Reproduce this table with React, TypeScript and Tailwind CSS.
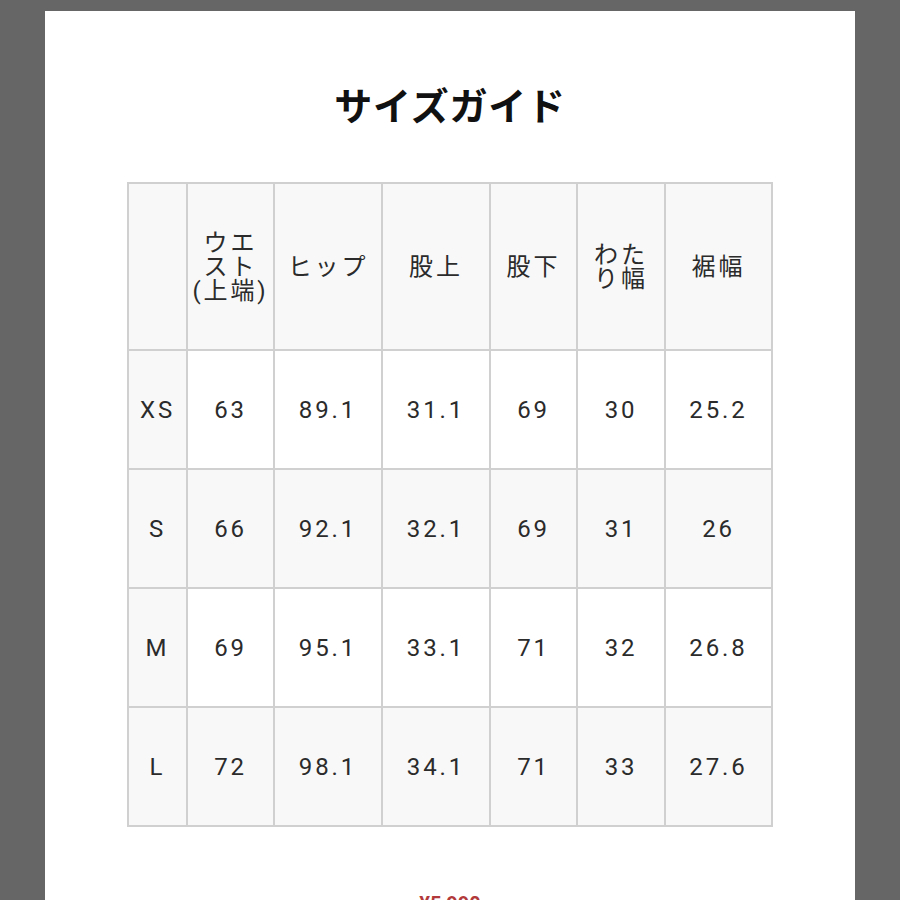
const headers = [
  { label: "", w: "w-[59px]" },
  { label: "ウエスト(上端)", w: "w-[87px]" },
  { label: "ヒップ", w: "w-[108px]" },
  { label: "股上", w: "w-[108px]" },
  { label: "股下", w: "w-[87px]" },
  { label: "わたり幅", w: "w-[88px]" },
  { label: "裾幅", w: "w-[107px]" },
];

const rows = [
  ["XS", "63", "89.1", "31.1", "69", "30", "25.2"],
  ["S", "66", "92.1", "32.1", "69", "31", "26"],
  ["M", "69", "95.1", "33.1", "71", "32", "26.8"],
  ["L", "72", "98.1", "34.1", "71", "33", "27.6"],
];

const font = { fontFamily: '"Roboto", "Noto Sans CJK JP", sans-serif' };

const App = () => {
  return (
    <div className="min-h-[900px] h-[900px] overflow-hidden bg-[#666666] pt-[11px]">
      <div className="mx-[45px] h-[1000px] bg-white pt-[64px]" style={font}>
        <h1
          className="text-center text-[38px] leading-[57px] font-bold text-[#111] tracking-[0.02em]"
          style={{ fontFamily: '"Noto Sans CJK JP", sans-serif' }}
        >
          サイズガイド
        </h1>

        <table className="mx-auto mt-[50px] w-[644px] table-fixed border-collapse text-[#2b2b2b]">
          <colgroup>
            {headers.map((h, i) => (
              <col key={i} className={h.w} />
            ))}
          </colgroup>
          <thead>
            <tr className="h-[167px] bg-[#f8f8f8]">
              {headers.map((h, i) => (
                <th
                  key={i}
                  className="border-2 border-[#d0d0d0] px-[4px] text-center align-middle text-[24px] font-normal leading-[24px] tracking-[0.12em]"
                >
                  {h.label}
                </th>
              ))}
            </tr>
          </thead>
          <tbody>
            {rows.map((r, ri) => (
              <tr key={ri} className={ri % 2 === 0 ? "h-[119px] bg-white" : "h-[119px] bg-[#f8f8f8]"}>
                {r.map((c, ci) => (
                  <td
                    key={ci}
                    className={
                      ci === 0
                        ? "border-2 border-[#d0d0d0] bg-[#f8f8f8] text-center text-[24px] tracking-[0.12em]"
                        : "border-2 border-[#d0d0d0] text-center text-[24px] tracking-[0.12em]"
                    }
                  >
                    {c}
                  </td>
                ))}
              </tr>
            ))}
          </tbody>
        </table>

        <p className="mt-[62px] text-center text-[20px] font-bold text-[#b23a3a]">¥5,990</p>
      </div>
    </div>
  );
};

export default App;
